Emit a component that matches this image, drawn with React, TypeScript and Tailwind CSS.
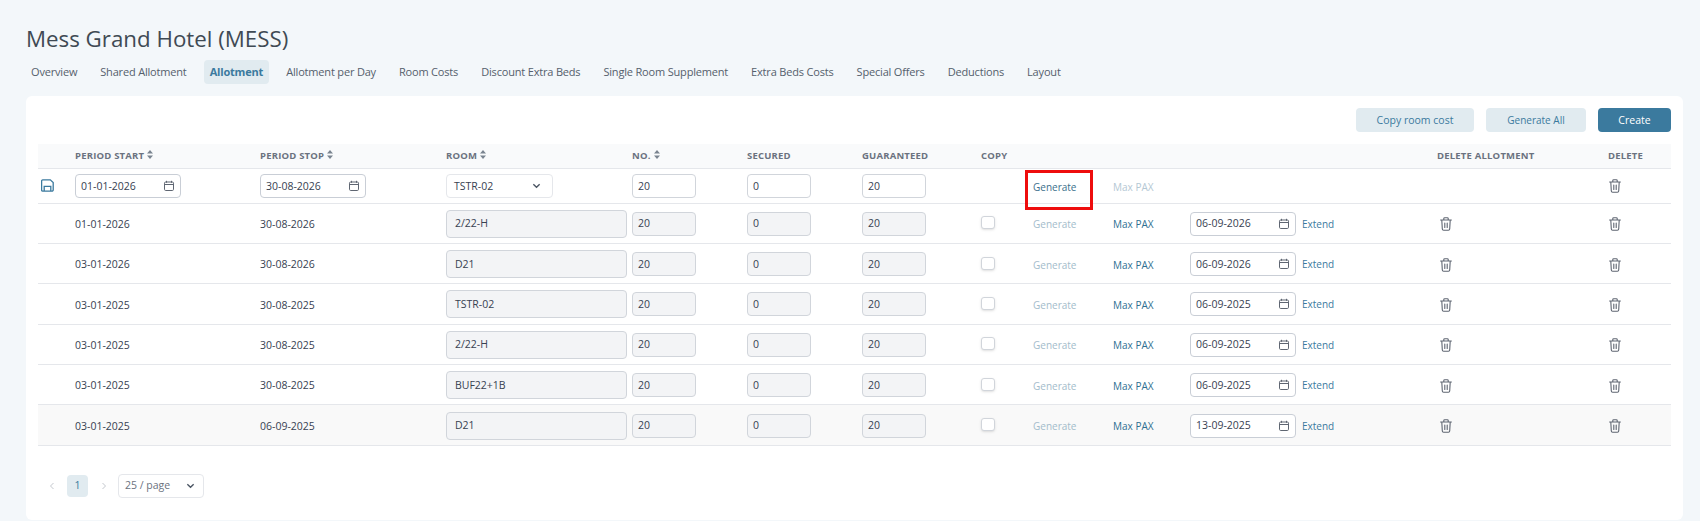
const cols = [37, 185, 186, 186, 115, 115, 119, 52, 80, 77, 247, 171, 63];

const rows = [
  { start: '01-01-2026', stop: '30-08-2026', room: '2/22-H', ext: '06-09-2026' },
  { start: '03-01-2026', stop: '30-08-2026', room: 'D21', ext: '06-09-2026' },
  { start: '03-01-2025', stop: '30-08-2025', room: 'TSTR-02', ext: '06-09-2025' },
  { start: '03-01-2025', stop: '30-08-2025', room: '2/22-H', ext: '06-09-2025' },
  { start: '03-01-2025', stop: '30-08-2025', room: 'BUF22+1B', ext: '06-09-2025' },
  { start: '03-01-2025', stop: '06-09-2025', room: 'D21', ext: '13-09-2025' },
];

const tabs = ['Overview', 'Shared Allotment', 'Allotment', 'Allotment per Day', 'Room Costs', 'Discount Extra Beds', 'Single Room Supplement', 'Extra Beds Costs', 'Special Offers', 'Deductions', 'Layout'];

const SortIcon = () => (
  <svg width="6" height="9" viewBox="0 0 6 9" className="ml-[3px] inline-block align-[0px]" fill="#7a8490">
    <path d="M3 0 6 3.4H0zM3 9 0 5.6h6z" />
  </svg>
);

const CalendarIcon = () => (
  <svg width="12" height="12" viewBox="0 0 12 12" fill="none" stroke="#5f6672" strokeWidth="1">
    <rect x="1.5" y="2" width="9" height="8.5" rx="1.2" />
    <path d="M3.5 .8v2M8.5 .8v2M1.5 4.5h9" />
  </svg>
);

const TrashIcon = () => (
  <svg width="12" height="14" viewBox="0 0 12 14" fill="none" stroke="#5f6672" strokeWidth="1.1" strokeLinecap="round" className="block">
    <path d="M.6 3h10.8M3.8 2.8V1.6a.9.9 0 0 1 .9-.9h2.6a.9.9 0 0 1 .9.9v1.2M1.8 3.2l.5 8.8a1.3 1.3 0 0 0 1.3 1.2h4.8a1.3 1.3 0 0 0 1.3-1.2l.5-8.8M4.8 6v4.4M7.2 6v4.4" />
  </svg>
);

const SaveIcon = () => (
  <svg width="13" height="13" viewBox="0 0 13 13" fill="none" stroke="#3b7a9e" strokeWidth="1.3">
    <path d="M1.7.8h7.6l2.9 2.7v7.4a1.2 1.2 0 0 1-1.2 1.2H1.7A1.2 1.2 0 0 1 .6 11V2A1.2 1.2 0 0 1 1.7.8z" />
    <path d="M3.2 12V7.4h6.6V12" />
  </svg>
);

const Chevron = () => (
  <svg width="9" height="6" viewBox="0 0 10 6" fill="none" stroke="#4b5563" strokeWidth="1.5">
    <path d="m1.5 1 3.5 3.5L8.5 1" />
  </svg>
);

const DateInput = ({ value, width }: { value: string; width: string }) => (
  <div className={`flex h-6 ${width} items-center justify-between rounded border border-[#c9ced6] bg-white pl-[5px] pr-[5px] text-[#374151]`}>
    <span className="pt-px">{value}</span>
    <CalendarIcon />
  </div>
);

const NumInput = ({ value, disabled }: { value: string; disabled?: boolean }) => (
  <div className={`flex h-6 w-16 items-center rounded border border-[#d1d5db] pl-[5px] pt-px text-[#374151] ${disabled ? 'bg-[#f3f4f6]' : 'bg-white'}`}>
    {value}
  </div>
);

const App = () => {
  return (
    <div className="h-[521px] overflow-hidden bg-[#f3f7fa] font-['Open_Sans',sans-serif] text-[10.5px] text-[#374151]">
      <h1 className="pl-[26px] pt-[23px] text-[22.3px] leading-[31px] text-[#3f4a54]">Mess Grand Hotel (MESS)</h1>
      <div className="mt-[6px] flex h-6 gap-[11px] pl-[25px] text-[11px] tracking-[-0.18px]">
        {tabs.map((t) =>
          t === 'Allotment' ? (
            <div key={t} className="flex items-center rounded bg-[#e1ebf0] px-1.5 font-bold text-[#3b7a9e]">{t}</div>
          ) : (
            <div key={t} className="flex items-center px-1.5 text-[#55606c]">{t}</div>
          )
        )}
      </div>
      <div className="relative ml-[26px] mr-[17px] mt-3 h-[424px] rounded-md bg-white px-3 pt-3">
        <div className="flex h-6 justify-end gap-3">
          <button className="w-[118px] rounded bg-[#e1ebf0] pt-px text-[#3b7a9e]">Copy room cost</button>
          <button className="w-[100px] rounded bg-[#e1ebf0] pt-px text-[10px] text-[#3b7a9e]">Generate All</button>
          <button className="w-[73px] rounded bg-[#3b7a9e] pt-px text-white">Create</button>
        </div>
        <table className="mt-3 w-[1633px] table-fixed border-collapse">
          <colgroup>
            {cols.map((w, i) => (
              <col key={i} style={{ width: w }} />
            ))}
          </colgroup>
          <thead>
            <tr className="h-6 border-b border-[#e5e7eb] bg-[#f9fafb] text-left text-[9.5px] font-bold tracking-[0.2px] text-[#6b7280]">
              <th></th>
              <th className="font-bold">PERIOD START<SortIcon /></th>
              <th className="font-bold">PERIOD STOP<SortIcon /></th>
              <th className="font-bold">ROOM<SortIcon /></th>
              <th className="font-bold">NO.<SortIcon /></th>
              <th className="font-bold">SECURED</th>
              <th className="font-bold">GUARANTEED</th>
              <th className="font-bold">COPY</th>
              <th></th>
              <th></th>
              <th></th>
              <th className="font-bold">DELETE ALLOTMENT</th>
              <th className="font-bold">DELETE</th>
            </tr>
          </thead>
          <tbody>
            <tr className="h-[35px] border-b border-[#e5e7eb]">
              <td className="pl-[3px]"><SaveIcon /></td>
              <td className="pt-px"><DateInput value="01-01-2026" width="w-[106px]" /></td>
              <td className="pt-px"><DateInput value="30-08-2026" width="w-[106px]" /></td>
              <td className="pt-px">
                <div className="flex h-6 w-[107px] items-center justify-between rounded border border-[#e5e7eb] bg-white pl-[7px] pr-[11px]">
                  <span className="pt-px">TSTR-02</span>
                  <Chevron />
                </div>
              </td>
              <td className="pt-px"><NumInput value="20" /></td>
              <td className="pt-px"><NumInput value="0" /></td>
              <td className="pt-px"><NumInput value="20" /></td>
              <td></td>
              <td className="pt-[3px] text-[10px] text-[#3b6f8c]">Generate</td>
              <td className="pt-[3px] text-[10px] text-[#b4c8d4]">Max PAX</td>
              <td></td>
              <td></td>
              <td className="pl-px"><TrashIcon /></td>
            </tr>
            {rows.map((r, i) => (
              <tr key={i} className={`h-[40.4px] border-b border-[#e5e7eb] ${i === rows.length - 1 ? 'bg-[#f9f9f9]' : ''}`}>
                <td></td>
                <td className="pt-[3px]">{r.start}</td>
                <td className="pt-[3px]">{r.stop}</td>
                <td className="pt-px">
                  <div className="flex h-7 w-[181px] items-center rounded border border-[#d1d5db] bg-[#f3f4f6] pl-2 pt-px">{r.room}</div>
                </td>
                <td className="pt-px"><NumInput value="20" disabled /></td>
                <td className="pt-px"><NumInput value="0" disabled /></td>
                <td className="pt-px"><NumInput value="20" disabled /></td>
                <td>
                  <div className="mb-px h-[13px] w-[14px] rounded-[3px] border border-[#d1d5db] bg-white shadow-sm"></div>
                </td>
                <td className="pt-[3px] text-[10px] text-[#a3bccb]">Generate</td>
                <td className="pt-[3px] text-[10px] text-[#2f6f92]">Max PAX</td>
                <td className="pt-px">
                  <div className="flex items-center gap-[6px]">
                    <DateInput value={r.ext} width="w-[106px]" />
                    <span className="pt-px text-[10px] text-[#3b7a9e]">Extend</span>
                  </div>
                </td>
                <td className="pl-[3px] pt-[2px]"><TrashIcon /></td>
                <td className="pl-px pt-[2px]"><TrashIcon /></td>
              </tr>
            ))}
          </tbody>
        </table>
        <div className="mt-7 flex items-center pl-[11px]">
          <svg width="6" height="8" viewBox="0 0 6 8" fill="none" stroke="#c4c8ce" strokeWidth="1"><path d="M4.5 1 1.5 4l3 3" /></svg>
          <div className="ml-3 flex h-[22px] w-[21px] items-center justify-center rounded bg-[#e1ebf0] text-[#3b7a9e]">1</div>
          <svg width="6" height="8" viewBox="0 0 6 8" fill="none" stroke="#c4c8ce" strokeWidth="1" className="ml-[13px]"><path d="m1.5 1 3 3-3 3" /></svg>
          <div className="ml-[11px] flex h-6 w-[86px] items-center justify-between rounded border border-[#e5e7eb] pl-[6px] pr-2 text-[#6b7280]">
            <span>25 / page</span>
            <Chevron />
          </div>
        </div>
        <div className="absolute left-[999px] top-[74px] h-10 w-[68px] border-[3px] border-[#ee0d0d]"></div>
      </div>
    </div>
  );
};

export default App;
